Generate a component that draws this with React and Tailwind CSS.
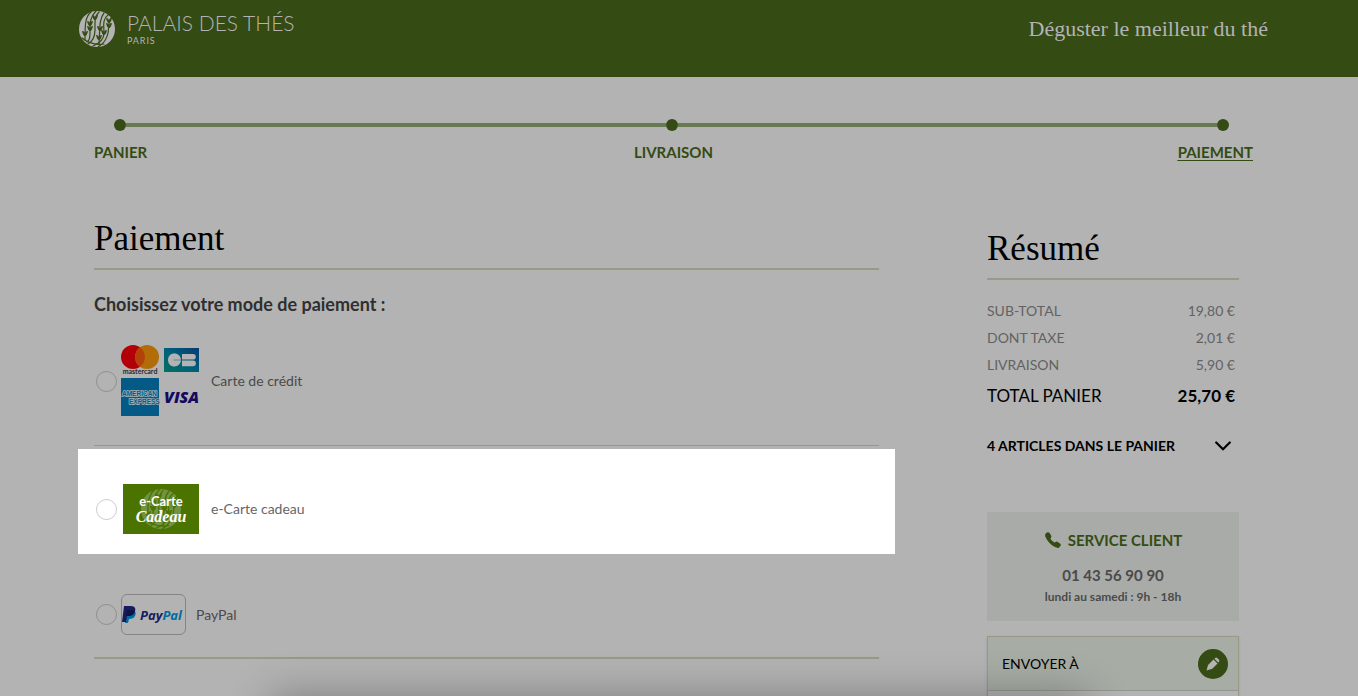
import { IoCall } from "react-icons/io5";

const steps = [
  { name: "PANIER", style: "text-left" },
  { name: "LIVRAISON", style: "text-center" },
  { name: "PAIEMENT", style: "text-right underline underline-offset-2" },
];

const totals = [
  { label: "SUB-TOTAL", value: "19,80 €" },
  { label: "DONT TAXE", value: "2,01 €" },
  { label: "LIVRAISON", value: "5,90 €" },
];

const Globe = ({ className, leaf }) => (
  <svg viewBox="0 0 36 36" className={className} aria-hidden="true">
    <circle cx="18" cy="18" r="18" fill="currentColor" />
    <g fill="none" stroke={leaf} strokeWidth="1.2" strokeLinecap="round">
      <path d="M12 1C6 6 6 14 6 29" />
      <path d="M17 0C11 6 11 12 11 19S11 29 8 31" />
      <path d="M20 1C15 6 16 12 16 19S14 30 9 33" />
      <path d="M29 4C23 8 25 16 25 22S21 32 14 35" />
      <path d="M25 2C20 8 21 18 20 34" />
      <path d="M32 7C29 12 30 17 29 22S26 32 19 36" />
      <path d="M3 27c7 6 14 7 22 6" />
    </g>
    <g fill={leaf}>
      <path d="M3 20q3 0 3 3 0-3 3-3-1 5-3 5t-3-5z" />
      <path d="M8 10q3 0 3 3 0-3 3-3-1 5-3 5t-3-5z" />
      <path d="M8 15q3 0 3 3 0-3 3-3-1 5-3 5t-3-5z" />
      <path d="M13 4q3 0 3 3 0-3 3-3-1 5-3 5t-3-5z" />
      <path d="M18 15q3 0 3 3 0-3 3-3-1 5-3 5t-3-5z" />
      <path d="M17 24q3 0 3 3 0-3 3-3-1 5-3 5t-3-5z" />
      <path d="M22 19q3 0 3 3 0-3 3-3-1 5-3 5t-3-5z" />
      <path d="M27 7q3 0 3 3 0-3 3-3-1 5-3 5t-3-5z" />
      <path d="M27 12q3 0 3 3 0-3 3-3-1 5-3 5t-3-5z" />
    </g>
  </svg>
);

const CardLogos = () => (
  <svg viewBox="0 0 78 72" className="w-[78px] h-[72px]" aria-hidden="true">
    <defs>
      <linearGradient id="cb" x1="0" y1="1" x2="1" y2="0">
        <stop offset="0" stopColor="#047060" />
        <stop offset="0.5" stopColor="#005f7c" />
        <stop offset="1" stopColor="#063a73" />
      </linearGradient>
    </defs>
    <circle cx="12" cy="12" r="12" fill="#b30008" />
    <circle cx="26" cy="12" r="12" fill="#b36d08" />
    <path d="M19 2.3a12 12 0 0 1 0 19.4a12 12 0 0 1 0-19.4z" fill="#b3420a" />
    <text x="19" y="29" textAnchor="middle" fontFamily="Lato, sans-serif" fontSize="7" fontWeight="700" fill="#2b2727">mastercard</text>
    <rect x="43" y="3" width="35" height="24" fill="url(#cb)" />
    <path d="M60 14.7H52.5V15.3H60C59.6 19 57 21.5 53.5 21.5C49.5 21.5 47 18.8 47 15S49.5 8.5 53.5 8.500C57 8.500 59.600 11 60 14.700z" fill="#b3b3b3" />
    <path d="M61 9h11a2.800 2.800 0 0 1 0 5.600H61zM61 15.400h11a2.900 2.900 0 0 1 0 5.800H61z" fill="#b3b3b3" />
    <rect x="0" y="33" width="38" height="38" fill="#045a86" />
    <g fontFamily="Liberation Sans, sans-serif" fontSize="6.500" fontWeight="700" fill="#045a86" stroke="#a5b0b5" strokeWidth="1.500" paintOrder="stroke">
      <text x="1" y="51">AMERICAN</text>
      <text x="8" y="59">EXPRESS</text>
    </g>
    <text x="43" y="58" fontFamily="Open Sans, sans-serif" fontSize="16" fontWeight="800" fontStyle="italic" fill="#17085f">VISA</text>
  </svg>
);

const GiftCard = () => (
  <div className="w-[76px] h-[50px] ml-[2px] bg-[#4b7300] text-white grid place-items-center">
    <Globe className="w-10 h-10 col-start-1 row-start-1 text-[#739342]" leaf="#4b7300" />
    <div className="col-start-1 row-start-1 z-10 flex flex-col items-center">
      <span className="text-[13px] leading-[15px] font-bold">e-Carte</span>
      <span className="font-['Liberation_Serif',serif] text-base leading-4 font-bold italic">Cadeau</span>
    </div>
  </div>
);

const PayPalLogo = () => (
  <div className="w-[65px] h-[41px] border border-[#858585] rounded-md">
    <svg viewBox="0 0 63 39" className="w-full h-full" aria-hidden="true">
      <path d="M4 15h8c2 2 2 4 1 6-1 2-3 3-6 3l-1 4H3z" fill="#006c9f" />
      <path d="M2 11h7c4 0 5 3 4 5-1 4-4 5-7 5H5l-1 6H0z" fill="#171c5c" />
      <path d="M5 15h6c1 0 2 1 2 1-1 4-4 5-7 5H4z" fill="#101348" />
      <text x="18" y="25" fontFamily="Open Sans, sans-serif" fontSize="13" fontWeight="700" fontStyle="italic" fill="#171c5c">
        Pay<tspan fill="#006c9f">Pal</tspan>
      </text>
    </svg>
  </div>
);

const PaymentOption = ({ id, label, children }) => {
  return (
    <div className="flex items-center pl-[2px]">
      <input
        type="radio"
        id={id}
        name="payment"
        className="appearance-none w-[21px] h-[21px] shrink-0 mr-1 rounded-full border border-black/20 checked:bg-[#344b13]"
      />
      <label htmlFor={id} className="flex items-center text-sm">
        {children}
        <span className={id === "paypal" ? "ml-[10px]" : "ml-3"}>{label}</span>
      </label>
    </div>
  );
};

const Header = () => (
  <header className="h-[77px] bg-[#344b13] text-[#b3b3b3]">
    <div className="max-w-[1200px] mx-auto pt-[11px] pr-[11px] flex justify-between">
      <a href="#" className="flex items-start gap-3">
        <Globe className="w-9 h-9" leaf="#344b13" />
        <span className="flex flex-col font-light">
          <span className="text-[21px] leading-6">PALAIS DES THÉS</span>
          <span className="text-[9px] leading-3 font-normal tracking-widest">PARIS</span>
        </span>
      </a>
      <p className="font-['Liberation_Serif',serif] text-[22px] leading-9">Déguster le meilleur du thé</p>
    </div>
  </header>
);

const Steps = () => (
  <nav className="pt-[42px] text-[#344b13]">
    <div className="pl-5 pr-[35px] flex items-center">
      <span className="w-3 h-3 rounded-full bg-[#344b13]" />
      <span className="h-1 flex-1 bg-[#677a52]" />
      <span className="w-3 h-3 rounded-full bg-[#344b13]" />
      <span className="h-1 flex-1 bg-[#677a52]" />
      <span className="w-3 h-3 rounded-full bg-[#344b13]" />
    </div>
    <ol className="pt-[11px] pr-[11px] grid grid-cols-3 text-[15px] leading-5 font-bold">
      {steps.map((s) => (
        <li key={s.name} className={s.style}>
          <a href="#">{s.name}</a>
        </li>
      ))}
    </ol>
  </nav>
);

const Summary = () => (
  <aside className="w-[252px] shrink-0 pt-[10px]">
    <h2 className="font-['Liberation_Serif',serif] text-[35px] leading-10 text-black pt-[1px] pb-[9px] border-b-2 border-[#989a88]">Résumé</h2>
    <table className="w-full mt-[17px] text-sm text-[#626262]">
      <tbody>
        {totals.map((t) => (
          <tr key={t.label} className="h-[27px]">
            <th scope="row" className="text-left font-normal">{t.label}</th>
            <td className="text-right pr-1">{t.value}</td>
          </tr>
        ))}
        <tr className="h-9 text-[17px] text-black">
          <th scope="row" className="text-left font-normal">TOTAL PANIER</th>
          <td className="text-right pr-1 font-bold">25,70 €</td>
        </tr>
      </tbody>
    </table>
    <button className="w-full mt-4 h-8 pr-2 flex items-center justify-between text-sm font-bold text-black">
      4 ARTICLES DANS LE PANIER
      <svg viewBox="0 0 16 10" className="w-4 h-[10px]" fill="none" stroke="currentColor" strokeWidth="2.2" strokeLinecap="round">
        <path d="M1.200 1.500L8 8.300L14.800 1.500" />
      </svg>
    </button>
    <section className="mt-[50px] h-[109px] pt-[18px] bg-[#a9aba8] flex flex-col items-center text-[#4a4a4a] font-bold">
      <h3 className="flex items-center gap-[6px] text-[15px] leading-5 text-[#344b13]">
        <IoCall className="w-[18px] h-[18px]" />
        SERVICE CLIENT
      </h3>
      <p className="mt-[15px] text-[15px] leading-5">01 43 56 90 90</p>
      <p className="mt-[2px] text-xs leading-5">lundi au samedi : 9h - 18h</p>
    </section>
    <section className="mt-[15px] h-[120px] border border-[#989a88] shadow-sm">
      <div className="h-[54px] pr-[10px] pl-[14px] bg-[#a7aca5] border-b border-[#949691] flex items-center justify-between">
        <h3 className="text-sm text-black">ENVOYER À</h3>
        <button aria-label="Modifier" className="w-[30px] h-[30px] rounded-full bg-[#344b13] text-[#b3b3b3] flex items-center justify-center">
          <svg viewBox="0 0 14 14" className="w-[14px] h-[14px]" fill="currentColor">
            <path d="M7.500 2.500l4 4-5.200 5.200L.5 13.500l1.500-5.600zM8.400 1.700l.8-.7q1-.8 2 0l1.800 1.800q.8 1 0 2l-.7.8z" />
          </svg>
        </button>
      </div>
    </section>
  </aside>
);

const App = () => {
  return (
    <div className="h-screen overflow-hidden bg-[#b3b3b3] text-[#4a4a4a] font-[Lato,sans-serif]">
      <Header />
      <div className="max-w-[1200px] mx-auto pl-[15px] pr-[15px]">
        <Steps />
        <div className="mt-14 pr-[25px] flex justify-between gap-[108px]">
          <main className="flex-1">
            <h1 className="font-['Liberation_Serif',serif] text-[35px] leading-10 text-black pt-[1px] pb-[9px] border-b-2 border-[#989a88]">Paiement</h1>
            <form>
              <h2 className="mt-[22px] text-lg leading-6 font-bold text-[#2f2f2f]">Choisissez votre mode de paiement :</h2>
              <div className="pt-[29px] pb-7 border-b border-[#989a88]">
                <PaymentOption id="card" label="Carte de crédit">
                  <CardLogos />
                </PaymentOption>
              </div>
              <div className="mt-[3px] -mx-4 px-4 pt-[35px] pb-5 bg-white text-[#666]">
                <PaymentOption id="gift" label="e-Carte cadeau">
                  <GiftCard />
                </PaymentOption>
              </div>
              <div className="pt-10 pb-[22px] border-b-2 border-[#989a88]">
                <PaymentOption id="paypal" label="PayPal">
                  <PayPalLogo />
                </PaymentOption>
              </div>
            </form>
          </main>
          <Summary />
        </div>
      </div>
      <div className="fixed inset-x-0 top-full flex justify-center pointer-events-none">
        <div className="w-[817px] h-40 shadow-[0_0_40px_rgba(0,0,0,0.3)]" />
      </div>
    </div>
  );
};

export default App;
